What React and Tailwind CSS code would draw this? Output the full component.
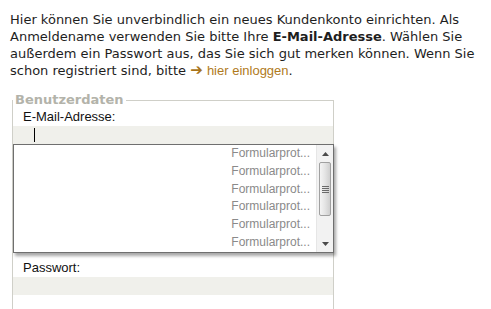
import React from 'react'

const suggestions = Array.from({ length: 6 }, () => 'Formularprot...')

function Scrollbar() {
  return (
    <div className="w-[17px] h-full flex flex-col bg-[#f2f2f2] border-l border-[#e6e6e6]">
      {/* up arrow */}
      <div className="h-[17px] flex items-center justify-center">
        <svg width="7" height="4" viewBox="0 0 7 4"><path d="M0 4 L3.5 0 L7 4 Z" fill="#4a4a4a" /></svg>
      </div>
      {/* thumb */}
      <div className="mx-[2px] h-[54px] rounded-[2px] border border-[#a0a0a0] bg-gradient-to-r from-[#f4f4f4] via-[#e4e4e4] to-[#cfcfcf] flex items-center justify-center">
        <svg width="7" height="7" viewBox="0 0 7 7">
          <path d="M0 0.5 H7 M0 2.5 H7 M0 4.5 H7 M0 6.5 H7" stroke="#6a6a6a" strokeWidth="1" />
        </svg>
      </div>
      <div className="flex-1" />
      {/* down arrow */}
      <div className="h-[17px] flex items-center justify-center">
        <svg width="7" height="4" viewBox="0 0 7 4"><path d="M0 0 L7 0 L3.5 4 Z" fill="#4a4a4a" /></svg>
      </div>
    </div>
  )
}

export default function App() {
  return (
    <div className="w-[491px] h-[309px] overflow-hidden bg-white">
      {/* ================= INTRO ================= */}
      <p className="pl-[10px] pt-[11px] text-[13px] leading-[17px] text-[#1e1e1e] font-['DejaVu_Sans',sans-serif]">
        Hier können Sie unverbindlich ein neues Kundenkonto einrichten. Als<br />
        Anmeldename verwenden Sie bitte Ihre <b>E-Mail-Adresse</b>. Wählen Sie<br />
        außerdem ein Passwort aus, das Sie sich gut merken können. Wenn Sie<br />
        schon registriert sind, bitte{' '}
        <span className="text-[#a8731a] font-bold text-[15px] leading-[14px]">➔</span>{' '}
        <a className="text-[#b07a1c] font-['Liberation_Sans',sans-serif] text-[13px]">hier einloggen</a>.
      </p>

      {/* ================= FORM ================= */}
      <fieldset className="relative ml-[12px] mt-[14px] w-[322px] h-[230px] border border-[#cfcfc8] p-0">
        <legend className="px-[2px] text-[13px] leading-[14px] font-bold text-[#b3b3aa] font-['DejaVu_Sans',sans-serif]">
          Benutzerdaten
        </legend>

        <div className="font-['Liberation_Sans',Arial,sans-serif] text-[13px] text-[#111]">
          <label className="block pl-[10px] pt-[2px] leading-[16px]">E-Mail-Adresse:</label>
          <div className="relative mt-[1px] h-[18px] bg-[#f0f0eb]">
            <span className="absolute left-[21px] top-[2px] w-px h-[14px] bg-black" />

            {/* autocomplete dropdown */}
            <div className="absolute left-0 top-[18px] z-10 w-[321px] h-[109px] bg-white border border-[#6f6f6f] shadow-[2px_3px_3px_rgba(0,0,0,0.35)] flex">
              <ul className="flex-1 pr-[6px] text-right text-[12px] leading-[17.8px] text-[#8a8a8a]">
                {suggestions.map((s, i) => (
                  <li key={i}>{s}</li>
                ))}
              </ul>
              <Scrollbar />
            </div>
          </div>

          <label className="block pl-[10px] mt-[116px] leading-[16px]">Passwort:</label>
          <div className="mt-[1px] h-[18px] bg-[#f0f0eb]" />
        </div>
      </fieldset>
    </div>
  )
}
